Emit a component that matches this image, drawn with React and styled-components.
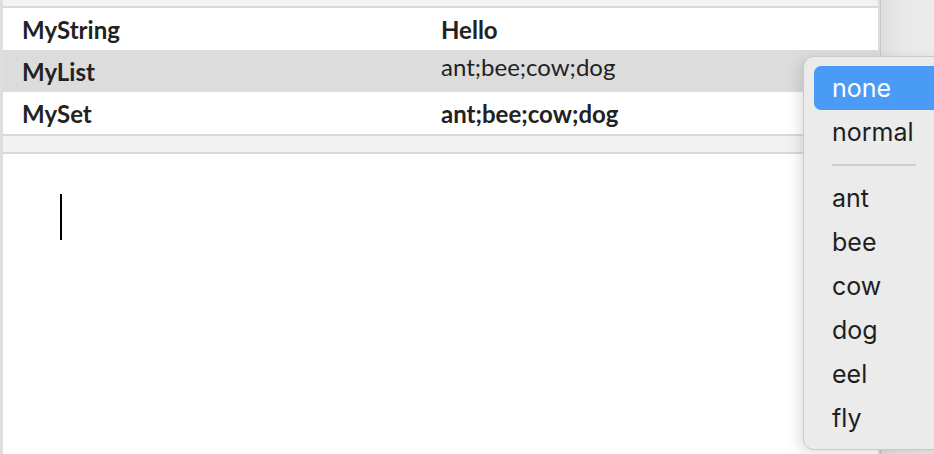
import React from 'react'
import { styled, createGlobalStyle } from 'styled-components'

const GlobalStyle = createGlobalStyle`
  html, body {
    margin: 0;
    padding: 0;
    height: 100%;
    overflow: hidden;
    background: #fff;
  }
  #root {
    height: 100%;
  }
`

const Window = styled.div`
  display: flex;
  height: 454px;
  position: relative;
  font-family: Lato, "Noto Sans", sans-serif;
  color: #222;
`

const Main = styled.div`
  flex: 1;
  display: flex;
  flex-direction: column;
  border-left: 3px solid #dedede;
  border-right: 2px solid #dcdcdc;
`

const Strip = styled.div`
  height: ${p => p.h}px;
  background: #f2f2f2;
  border-bottom: 2px solid #d9d9d9;
  border-top: ${p => (p.top ? '2px solid #d9d9d9' : 'none')};
`

const Row = styled.div`
  display: flex;
  align-items: center;
  height: 42px;
  padding-left: 19px;
  background: ${p => (p.selected ? '#dcdcdc' : '#fff')};
  font-size: 24px;
`

const Name = styled.div`
  width: 419px;
  font-weight: 700;
`

const Value = styled.div`
  font-weight: ${p => (p.plain ? 400 : 700)};
  padding-bottom: ${p => (p.plain ? '10px' : '0')};
`

const Editor = styled.div`
  flex: 1;
  background: #fff;
  padding: 40px 0 0 57px;
`

const Caret = styled.div`
  width: 2px;
  height: 46px;
  background: #000;
`

const Side = styled.div`
  width: 53px;
  border-left: 1px solid #c6c6c6;
  background: linear-gradient(to right, #dedede, #e9e9e9 40%, #ececec);
`

const Menu = styled.div`
  position: absolute;
  left: 803px;
  top: 56px;
  width: 150px;
  padding: 9px 0 9px 10px;
  background: #ebebeb;
  border: 1px solid #c9c9c9;
  border-radius: 11px;
  box-shadow: -4px 4px 14px rgba(0, 0, 0, 0.12);
  font-family: Inter, "Liberation Sans", sans-serif;
  font-size: 25px;
  color: #1e1e1e;
  z-index: 2;
`

const Item = styled.div`
  height: 44px;
  display: flex;
  align-items: center;
  padding-left: 18px;
  border-radius: 7px;
  background: ${p => (p.active ? '#4a9bf6' : 'transparent')};
  color: ${p => (p.active ? '#fff' : 'inherit')};
`

const Separator = styled.div`
  height: 2px;
  margin: 10px 0 10px 18px;
  width: 84px;
  background: #cfcfcf;
`

const rows = [
  { name: 'MyString', value: 'Hello' },
  { name: 'MyList', value: 'ant;bee;cow;dog', plain: true, selected: true },
  { name: 'MySet', value: 'ant;bee;cow;dog' },
]

const choices = ['ant', 'bee', 'cow', 'dog', 'eel', 'fly']

export default function App() {
  return (
    <>
      <GlobalStyle />
      <Window>
        <Main>
          <Strip h={6} />
          {rows.map(r => (
            <Row key={r.name} selected={r.selected}>
              <Name>{r.name}</Name>
              <Value plain={r.plain}>{r.value}</Value>
            </Row>
          ))}
          <Strip h={16} top />
          <Editor>
            <Caret />
          </Editor>
        </Main>
        <Side />
        <Menu>
          <Item active>none</Item>
          <Item>normal</Item>
          <Separator />
          {choices.map(c => (
            <Item key={c}>{c}</Item>
          ))}
        </Menu>
      </Window>
    </>
  )
}
